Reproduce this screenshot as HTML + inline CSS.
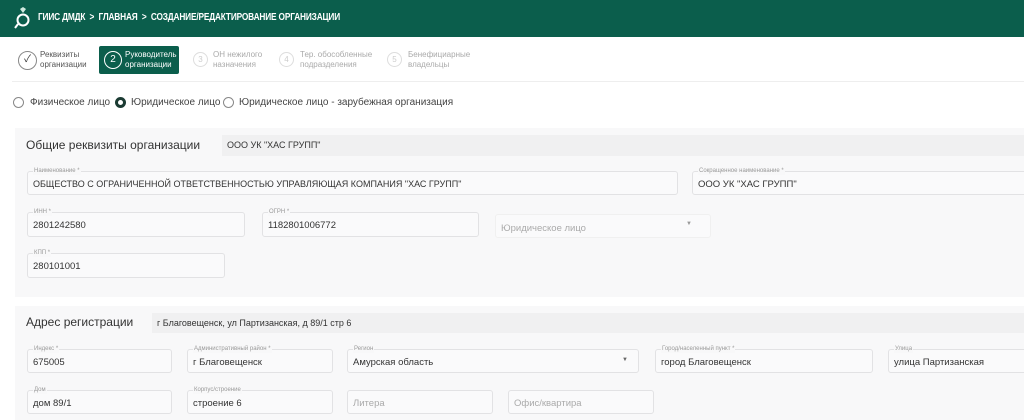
<!DOCTYPE html>
<html><head><meta charset="utf-8"><style>
*{box-sizing:border-box;margin:0;padding:0}
body{width:1024px;height:420px;overflow:hidden;background:#fff;font-family:"Liberation Sans","Noto Sans CJK SC",sans-serif;color:#333;position:relative}
.a{position:absolute}
.hdr{left:0;top:0;width:1024px;height:37px;background:#0b5e4c}
.hdr .t{left:38px;top:12px;color:#fff;font-weight:bold;font-size:10px;letter-spacing:-0.2px;white-space:nowrap;transform:scaleX(0.83);transform-origin:0 0}
.step{font-size:8px;line-height:10px;color:#555}
.circ{border-radius:50%;border:1px solid #888;width:18px;height:18px;text-align:center;font-size:10px;line-height:16px}
.panel{background:#f8f8f9}
.strip{background:#f0f0f1;font-size:9px;color:#333;padding-left:5px;line-height:20px}
.f{border:1px solid #e2e2e4;border-radius:3px;background:#fafafb}
.f .l{position:absolute;left:5px;top:-5px;font-size:6px;color:#999;background:#f8f8f9;padding:0 1px;line-height:8px}
.f .v{position:absolute;left:5px;top:7px;font-size:9.5px;color:#333;white-space:nowrap}
.f .p{color:#aaa}
.r{font-size:10px;color:#444}
.rb{width:11px;height:11px;border-radius:50%;border:1px solid #888;display:inline-block}
h3{font-size:12px;font-weight:normal;color:#333}
</style></head><body>
<div class="a hdr">
<svg class="a" style="left:14px;top:7px" width="18" height="22" viewBox="0 0 18 22"><path d="M6 2 L9 0 L12 2 L9 6 Z" fill="#cfe9df"/><circle cx="9" cy="13" r="5.5" fill="none" stroke="#fff" stroke-width="2"/><path d="M4 17 L1 21" stroke="#fff" stroke-width="2"/></svg>
<div class="a t">ГИИС ДМДК &nbsp;&gt;&nbsp; ГЛАВНАЯ &nbsp;&gt;&nbsp; СОЗДАНИЕ/РЕДАКТИРОВАНИЕ ОРГАНИЗАЦИИ</div>
</div>
<div class="a circ" style="left:18px;top:51px;width:19px;height:19px;font-size:10px">✓</div>
<div class="a step" style="left:40px;top:50px">Реквизиты<br>организации</div>
<div class="a" style="left:99px;top:46px;width:80px;height:28px;background:#0b5e4c;border-radius:2px"></div>
<div class="a circ" style="left:104px;top:51px;border-color:#fff;color:#fff">2</div>
<div class="a step" style="left:125px;top:50px;color:#fff">Руководитель<br>организации</div>
<div class="a circ" style="left:193px;top:52px;border-color:#ddd;color:#ccc;width:15px;height:15px;line-height:13px;font-size:8px">3</div>
<div class="a step" style="left:213px;top:50px;color:#aaa">ОН нежилого<br>назначения</div>
<div class="a circ" style="left:279px;top:52px;border-color:#ddd;color:#ccc;width:15px;height:15px;line-height:13px;font-size:8px">4</div>
<div class="a step" style="left:300px;top:50px;color:#aaa">Тер. обособленные<br>подразделения</div>
<div class="a circ" style="left:387px;top:52px;border-color:#ddd;color:#ccc;width:15px;height:15px;line-height:13px;font-size:8px">5</div>
<div class="a step" style="left:408px;top:50px;color:#aaa">Бенефициарные<br>владельцы</div>
<div class="a" style="left:12px;top:81px;width:1012px;height:1px;background:#eee"></div>
<div class="a rb" style="left:13px;top:97px"></div><div class="a r" style="left:30px;top:97px">Физическое лицо</div>
<div class="a rb" style="left:115px;top:97px;border:3px solid #1b3b33"></div><div class="a r" style="left:131px;top:97px">Юридическое лицо</div>
<div class="a rb" style="left:223px;top:97px"></div><div class="a r" style="left:239px;top:97px">Юридическое лицо - зарубежная организация</div>

<div class="a panel" style="left:15px;top:128px;width:1009px;height:169px"></div>
<h3 class="a" style="left:26px;top:138px">Общие реквизиты организации</h3>
<div class="a strip" style="left:222px;top:135px;width:802px;height:21px">ООО УК "ХАС ГРУПП"</div>
<div class="a f" style="left:27px;top:171px;width:651px;height:24px"><span class="l">Наименование *</span><span class="v" style="font-size:9px">ОБЩЕСТВО С ОГРАНИЧЕННОЙ ОТВЕТСТВЕННОСТЬЮ УПРАВЛЯЮЩАЯ КОМПАНИЯ "ХАС ГРУПП"</span></div>
<div class="a f" style="left:692px;top:171px;width:340px;height:24px"><span class="l">Сокращенное наименование *</span><span class="v">ООО УК "ХАС ГРУПП"</span></div>
<div class="a f" style="left:27px;top:212px;width:218px;height:25px"><span class="l">ИНН *</span><span class="v">2801242580</span></div>
<div class="a f" style="left:262px;top:212px;width:217px;height:25px"><span class="l">ОГРН *</span><span class="v">1182801006772</span></div>
<div class="a f" style="left:495px;top:214px;width:216px;height:24px;border-color:#f0f0f0"><span class="v p" style="top:8px">Юридическое лицо</span><span class="a" style="right:18px;top:6px;font-size:6px;color:#999">▼</span></div>
<div class="a f" style="left:27px;top:253px;width:198px;height:25px"><span class="l">КПП *</span><span class="v">280101001</span></div>

<div class="a panel" style="left:15px;top:306px;width:1009px;height:114px"></div>
<h3 class="a" style="left:26px;top:315px">Адрес регистрации</h3>
<div class="a strip" style="left:152px;top:313px;width:872px;height:20px">г Благовещенск, ул Партизанская, д 89/1 стр 6</div>
<div class="a f" style="left:27px;top:349px;width:145px;height:24px"><span class="l">Индекс *</span><span class="v">675005</span></div>
<div class="a f" style="left:187px;top:349px;width:146px;height:24px"><span class="l">Административный район *</span><span class="v">г Благовещенск</span></div>
<div class="a f" style="left:347px;top:349px;width:292px;height:24px"><span class="l">Регион</span><span class="v">Амурская область</span><span class="a" style="right:10px;top:7px;font-size:6px;color:#666">▼</span></div>
<div class="a f" style="left:655px;top:349px;width:218px;height:24px"><span class="l">Город/населенный пункт *</span><span class="v">город Благовещенск</span></div>
<div class="a f" style="left:888px;top:349px;width:140px;height:24px"><span class="l">Улица</span><span class="v">улица Партизанская</span></div>
<div class="a f" style="left:27px;top:390px;width:145px;height:24px"><span class="l">Дом</span><span class="v">дом 89/1</span></div>
<div class="a f" style="left:187px;top:390px;width:146px;height:24px"><span class="l">Корпус/строение</span><span class="v">строение 6</span></div>
<div class="a f" style="left:347px;top:390px;width:146px;height:24px"><span class="v p">Литера</span></div>
<div class="a f" style="left:508px;top:390px;width:146px;height:24px"><span class="v p">Офис/квартира</span></div>
</body></html>
